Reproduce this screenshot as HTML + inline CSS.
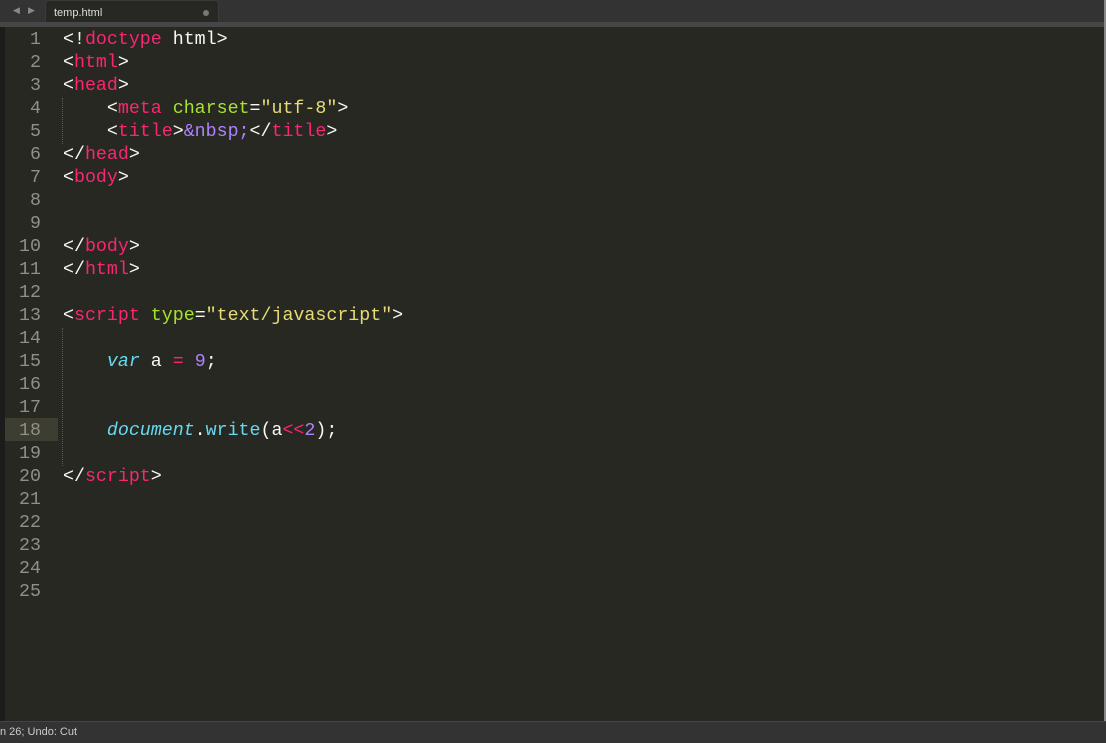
<!DOCTYPE html>
<html><head><meta charset="utf-8"><style>
*{margin:0;padding:0;box-sizing:border-box}
body{width:1106px;height:743px;background:#272822;position:relative;overflow:hidden;font-family:"Liberation Mono",monospace}
#tabs{position:absolute;left:0;top:0;width:1106px;height:22px;background:#333333}
#tabline{position:absolute;left:0;top:22px;width:1106px;height:5px;background:#464646}
#tab{position:absolute;left:45px;top:0;width:174px;height:23px;background:#272822;border:1px solid #3a3a3a;border-bottom:none;border-radius:4px 4px 0 0;font:11px "Liberation Sans",sans-serif;color:#ddd;padding:6px 0 0 8px}
#tab .dot{position:absolute;right:9px;top:9px;width:6px;height:6px;border-radius:50%;background:#777}
.arr{position:absolute;top:6px;color:#888;font-size:9px;font-family:"DejaVu Sans",sans-serif}
#left{position:absolute;left:0;top:27px;width:5px;height:695px;background:#1c1c1a}
#right{position:absolute;right:0;top:0;width:2px;height:743px;background:#888}
#status{position:absolute;left:0;top:721px;width:1106px;height:22px;background:#333;border-top:1px solid #444;font:11px "Liberation Sans",sans-serif;color:#ccc;padding:4px 0 0 0}
.ln{position:absolute;left:5px;width:36px;text-align:right;color:#8f908a;font-size:18.3px;line-height:23px}
.code{position:absolute;left:63px;color:#f8f8f2;font-size:18.3px;line-height:23px;white-space:pre}
.hl{position:absolute;left:5px;top:418px;width:53px;height:23px;background:#3e3d32}
.g{position:absolute;left:62px;border-left:1px dotted #555}
.t{color:#f92672}.a{color:#a6e22e}.s{color:#e6db74}.n{color:#ae81ff}.i{color:#66d9ef;font-style:italic}.f{color:#66d9ef}
</style></head><body>
<div id="tabs"><span class="arr" style="left:13px">◀</span><span class="arr" style="left:28px">▶</span>
<div id="tab">temp.html<div class="dot"></div></div></div>
<div id="tabline"></div>
<div id="left"></div>
<div class="hl"></div>
<div class="g" style="top:98px;height:46px"></div>
<div class="g" style="top:328px;height:138px"></div>
<div class="ln" style="top:29px">1<br>2<br>3<br>4<br>5<br>6<br>7<br>8<br>9<br>10<br>11<br>12<br>13<br>14<br>15<br>16<br>17<br>18<br>19<br>20<br>21<br>22<br>23<br>24<br>25</div>
<div class="code" style="top:29px">&lt;!<span class="t">doctype</span> html&gt;
&lt;<span class="t">html</span>&gt;
&lt;<span class="t">head</span>&gt;
    &lt;<span class="t">meta</span> <span class="a">charset</span>=<span class="s">"utf-8"</span>&gt;
    &lt;<span class="t">title</span>&gt;<span class="n">&amp;nbsp;</span>&lt;/<span class="t">title</span>&gt;
&lt;/<span class="t">head</span>&gt;
&lt;<span class="t">body</span>&gt;


&lt;/<span class="t">body</span>&gt;
&lt;/<span class="t">html</span>&gt;

&lt;<span class="t">script</span> <span class="a">type</span>=<span class="s">"text/javascript"</span>&gt;

    <span class="i">var</span> a <span class="t">=</span> <span class="n">9</span>;


    <span class="i">document</span>.<span class="f">write</span>(a<span class="t">&lt;&lt;</span><span class="n">2</span>);

&lt;/<span class="t">script</span>&gt;</div>
<div id="right"></div>
<div id="status">n 26; Undo: Cut</div>
</body></html>
